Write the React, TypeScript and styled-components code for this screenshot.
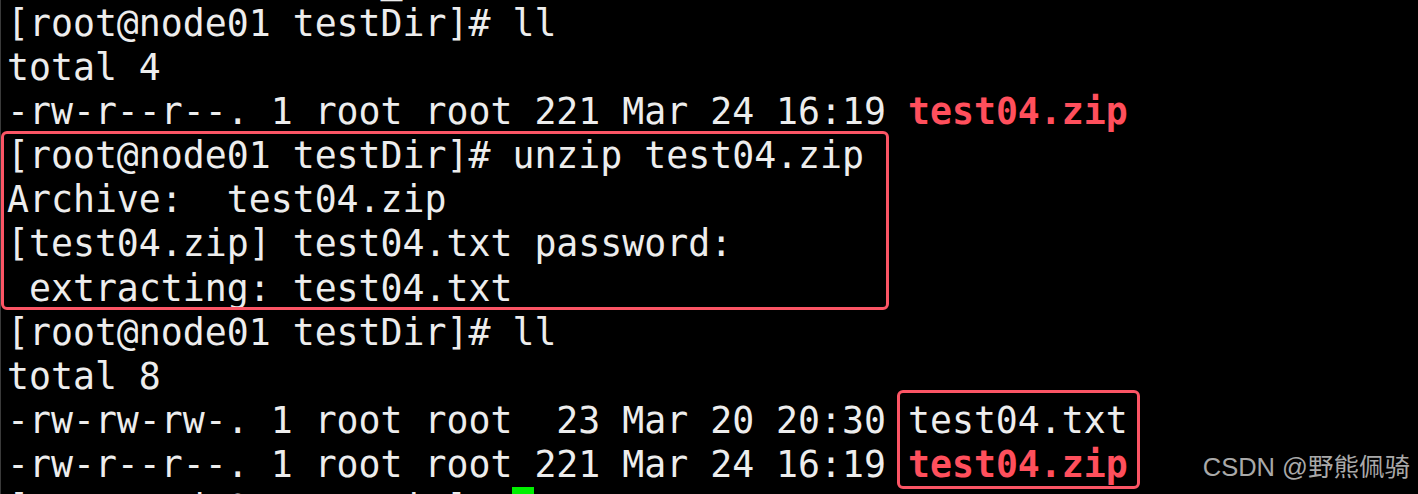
import React from "react";
import styled, { createGlobalStyle } from "styled-components";

const GlobalStyle = createGlobalStyle`
  html, body {
    margin: 0;
    padding: 0;
    background: #000;
    overflow: hidden;
  }
`;

const Terminal = styled.div`
  position: relative;
  height: 494px;
  box-sizing: border-box;
  overflow: hidden;
  background: #000;
  border-left: 1px solid #3a3a3a;
  padding-left: 6px;
  padding-top: 2px;
  font-family: "DejaVu Sans Mono", "Liberation Mono", monospace;
  font-size: 36.5px;
  line-height: 44.1px;
  color: #ededed;
  white-space: pre;
`;

const Line = styled.div<{ $hidden?: boolean }>`
  height: 44.1px;
  margin-top: ${(p) => (p.$hidden ? "-44.1px" : "0")};
`;

const ZipName = styled.span`
  font-weight: bold;
  color: #ff4f5c;
`;

const Cursor = styled.span`
  display: inline-block;
  width: 22px;
  height: 42px;
  vertical-align: top;
  background: #00f000;
`;

const Highlight = styled.div<{ $x: number; $y: number; $w: number; $h: number }>`
  position: absolute;
  left: ${(p) => p.$x}px;
  top: ${(p) => p.$y}px;
  width: ${(p) => p.$w}px;
  height: ${(p) => p.$h}px;
  box-sizing: border-box;
  border: 3px solid #fc5565;
  border-radius: 6px;
  pointer-events: none;
`;

const Watermark = styled.div`
  position: absolute;
  right: 8px;
  top: 452px;
  font-family: "Liberation Sans", Arial, "Noto Sans CJK SC", sans-serif;
  font-size: 25.5px;
  line-height: 30px;
  color: #a9a9a9;
  white-space: nowrap;
`;

export default function App() {
  return (
    <>
      <GlobalStyle />
      <Terminal>
        <Line $hidden>{"                 _"}</Line>
        <Line>[root@node01 testDir]# ll</Line>
        <Line>total 4</Line>
        <Line>
          -rw-r--r--. 1 root root 221 Mar 24 16:19 <ZipName>test04.zip</ZipName>
        </Line>
        <Line>[root@node01 testDir]# unzip test04.zip</Line>
        <Line>Archive:  test04.zip</Line>
        <Line>[test04.zip] test04.txt password:</Line>
        <Line> extracting: test04.txt</Line>
        <Line>[root@node01 testDir]# ll</Line>
        <Line>total 8</Line>
        <Line>-rw-rw-rw-. 1 root root  23 Mar 20 20:30 test04.txt</Line>
        <Line>
          -rw-r--r--. 1 root root 221 Mar 24 16:19 <ZipName>test04.zip</ZipName>
        </Line>
        <Line>
          [root@node01 testDir]# <Cursor />
        </Line>
        <Highlight $x={0} $y={131} $w={888} $h={179} />
        <Highlight $x={896} $y={390} $w={243} $h={99} />
        <Watermark>CSDN @野熊佩骑</Watermark>
      </Terminal>
    </>
  );
}
